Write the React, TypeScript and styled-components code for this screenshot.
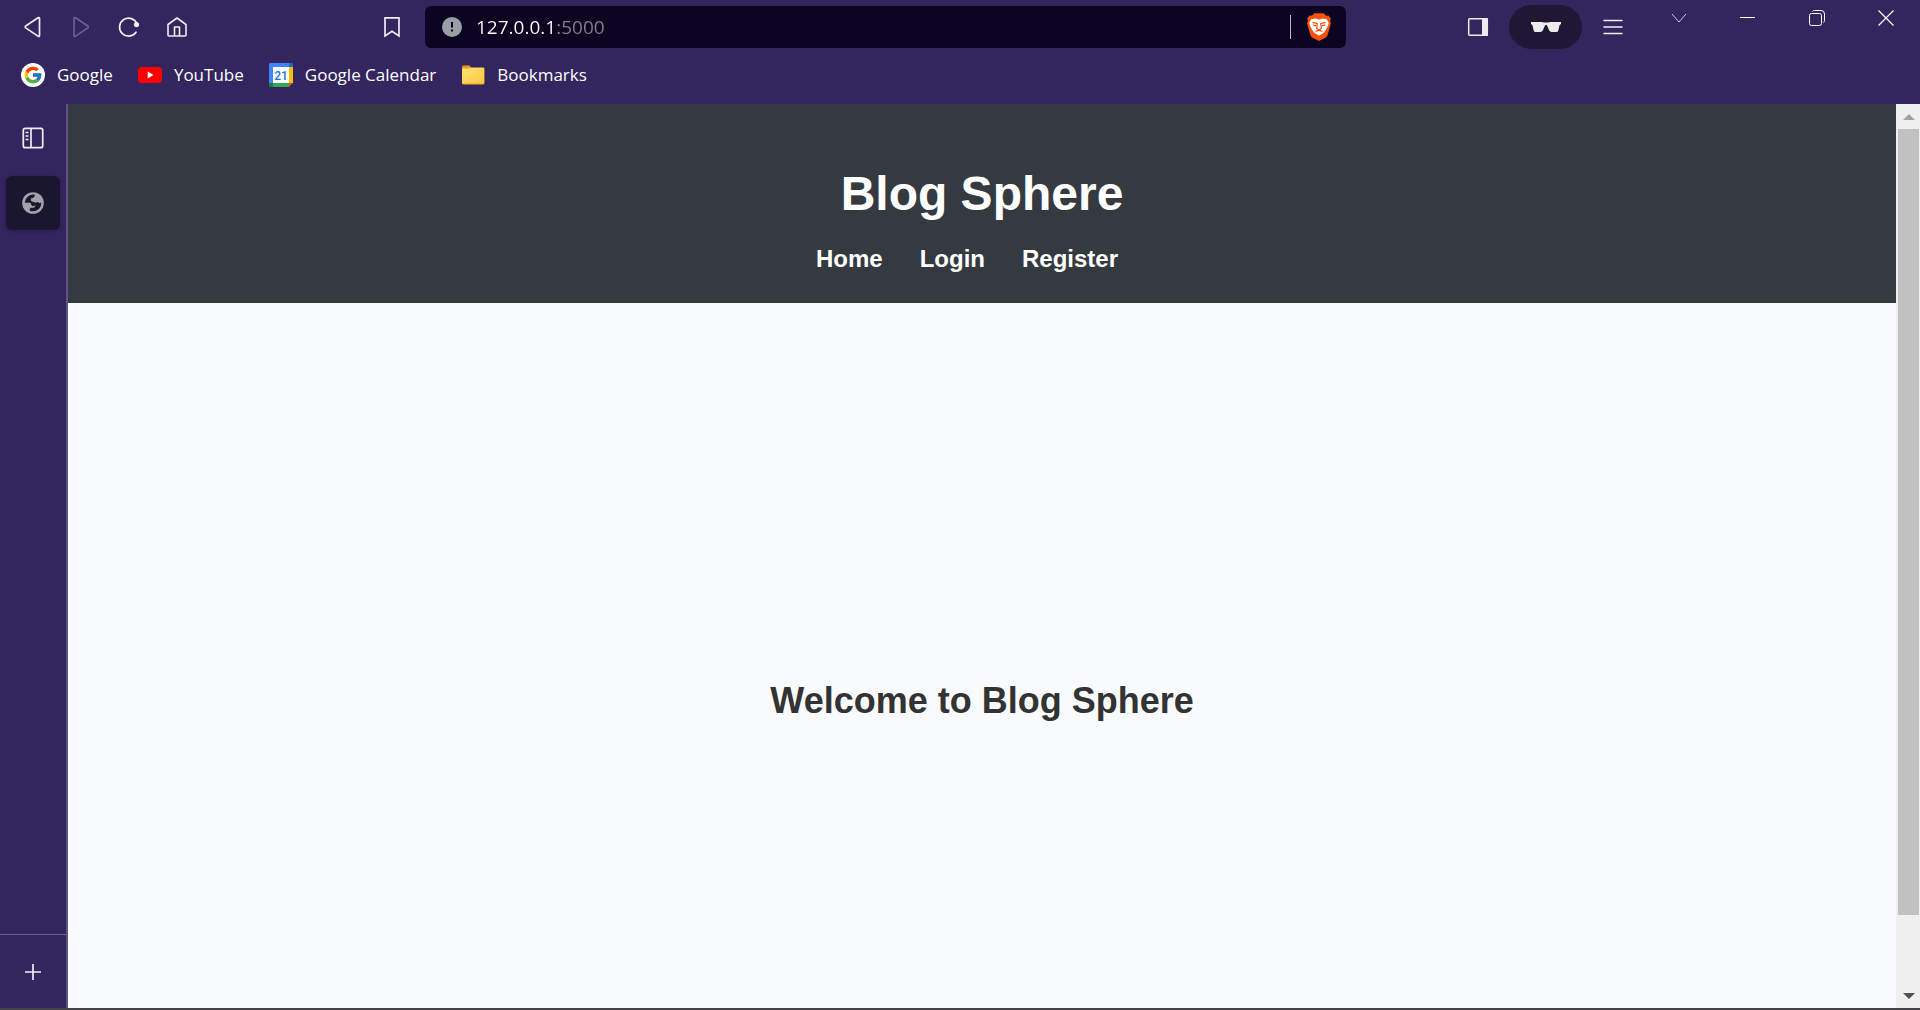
import React from "react";
import styled, { createGlobalStyle } from "styled-components";
import { FcGoogle } from "react-icons/fc";

const uiFont = `"Segoe UI", "Open Sans", "Noto Sans", sans-serif`;

const GlobalStyle = createGlobalStyle`
  *, *::before, *::after { box-sizing: border-box; }
  body { margin: 0; background: #33255e; }
  button, input { font: inherit; color: inherit; }
  h1, h2, ul { margin: 0; padding: 0; }
  svg { display: block; }
`;

const Browser = styled.div`
  display: flex;
  flex-direction: column;
  height: 100vh;
  overflow: hidden;
  background: #33255e;
  color: #f1eff7;
  font-family: ${uiFont};
  border-bottom: 2px solid #444446;
`;

const Toolbar = styled.header`
  display: flex;
  align-items: center;
  height: 54px;
`;

const NavControls = styled.div`
  display: flex;
  flex: 0 0 425px;
  padding: 0 9px;
`;

const IconButton = styled.button<{ $dim?: boolean; $push?: boolean }>`
  display: grid;
  place-items: center;
  width: 48px;
  height: 44px;
  padding: 0;
  border: 0;
  background: none;
  color: ${(p) => (p.$dim ? "#6b5f8f" : "#efedf5")};
  margin-left: ${(p) => (p.$push ? "auto" : "0")};
`;

const AddressBar = styled.form`
  display: flex;
  align-items: center;
  flex: 1;
  height: 42px;
  padding: 0 14px 0 17px;
  border-radius: 6px;
  background: #0c0522;
`;

const AddressInput = styled.input`
  flex: 1;
  min-width: 0;
  margin-left: 14px;
  padding: 0;
  border: 0;
  outline: 0;
  font-size: 19px;
  line-height: 28px;
  color: #ffffff;
  background: linear-gradient(to right, #ffffff 81px, #837f90 81px);
  background-clip: text;
  -webkit-background-clip: text;
  -webkit-text-fill-color: transparent;
`;

const ShieldButton = styled.button`
  display: flex;
  padding: 0 0 0 15px;
  border: 0;
  border-left: 1px solid #bdbac6;
  height: 24px;
  align-items: center;
  background: none;
`;

const WindowTools = styled.div`
  display: flex;
  align-items: center;
  align-self: stretch;
  gap: 7px;
  padding-left: 108px;
`;

const PrivatePill = styled.button`
  display: grid;
  place-items: center;
  width: 73px;
  height: 44px;
  padding: 0;
  border: 0;
  border-radius: 22px;
  background: #1e1835;
  color: #ececec;
`;

const WindowButtons = styled.div`
  display: flex;
  align-self: flex-start;
`;

const WindowButton = styled.button`
  display: grid;
  place-items: center;
  width: 69px;
  height: 35px;
  padding: 0;
  border: 0;
  background: none;
  color: #ffffff;
`;

const BookmarksBar = styled.nav`
  display: flex;
  align-items: center;
  gap: 25px;
  height: 50px;
  padding: 0 21px 8px;
`;

const BookmarkLink = styled.a`
  display: flex;
  align-items: center;
  gap: 12px;
  color: #ffffff;
  font-size: 17px;
  line-height: 24px;
  text-decoration: none;
  white-space: nowrap;
`;

const GoogleBadge = styled.span`
  display: grid;
  place-items: center;
  width: 24px;
  height: 24px;
  border-radius: 50%;
  background: #ffffff;
`;

const Workspace = styled.div`
  display: flex;
  flex: 1;
  min-height: 0;
`;

const Sidebar = styled.aside`
  display: flex;
  flex-direction: column;
  align-items: center;
  width: 68px;
  padding-top: 12px;
  border-right: 2px solid #5f5285;
`;

const TabButton = styled.button`
  display: grid;
  place-items: center;
  width: 54px;
  height: 54px;
  margin-top: 16px;
  padding: 0;
  border: 0;
  border-radius: 6px;
  background: #1b162f;
  color: #a0a4aa;
  box-shadow: 0 1px 4px rgba(20, 12, 50, 0.35);
`;

const NewTab = styled.div`
  display: grid;
  place-items: center;
  align-self: stretch;
  height: 74px;
  margin-top: auto;
  border-top: 1px solid #6b5f8f;
`;

const Page = styled.div`
  display: flex;
  flex: 1;
  flex-direction: column;
  min-width: 0;
  background: #f8fafc;
  font-family: Arial, "Liberation Sans", sans-serif;
`;

const SiteHeader = styled.header`
  display: flex;
  flex-direction: column;
  align-items: center;
  gap: 24px;
  padding: 62px 0 30px;
  background: #353a41;
  color: #ffffff;
`;

const SiteTitle = styled.h1`
  font-size: 48px;
  line-height: 55px;
`;

const SiteNav = styled.ul`
  display: flex;
  gap: 37px;
  padding-right: 30px;
  list-style: none;
`;

const SiteLink = styled.a`
  display: block;
  color: inherit;
  font-size: 24px;
  font-weight: bold;
  line-height: 28px;
  text-decoration: none;
`;

const Welcome = styled.main`
  display: grid;
  flex: 1;
  place-items: center;
  padding-top: 90px;
`;

const WelcomeTitle = styled.h2`
  color: #333333;
  font-size: 36px;
  line-height: 42px;
`;

const Scrollbar = styled.div`
  display: flex;
  flex-direction: column;
  width: 24px;
  padding: 0 1px 0 2px;
  background: #f0f0f0;
`;

const ScrollArrow = styled.button`
  display: grid;
  place-items: center;
  height: 25px;
  padding: 0;
  border: 0;
  background: none;
`;

const ScrollTrack = styled.div`
  flex: 1;
`;

const ScrollThumb = styled.div`
  height: 92%;
  background: #c1c1c1;
`;

const YouTubeIcon = () => (
  <svg width="24" height="24" viewBox="0 0 24 24" aria-hidden="true">
    <rect y="4" width="24" height="16" rx="4" fill="#ff0000" />
    <path d="M9.7 8.600v6.800l5.800-3.400z" fill="#fff" />
  </svg>
);

const CalendarIcon = () => (
  <svg width="24" height="24" viewBox="0 0 24 24" aria-hidden="true">
    <path d="M0 1a1 1 0 0 1 1-1h19v4H4v16H0z" fill="#4285f4" />
    <path d="M20 0h3a1 1 0 0 1 1 1v3h-4z" fill="#1967d2" />
    <path d="M20 4h4v16h-4z" fill="#fbbc04" />
    <path d="M4 20h16v4H4z" fill="#34a853" />
    <path d="M0 20h4v4H1a1 1 0 0 1-1-1z" fill="#188038" />
    <path d="M20 20h4l-4 4z" fill="#ea4335" />
    <path d="M4 4h16v16H4z" fill="#fff" />
    <text x="12" y="16.500" textAnchor="middle" fontFamily="Roboto, sans-serif" fontSize="12" fontWeight="500" fill="#1a73e8">21</text>
  </svg>
);

const FolderIcon = () => (
  <svg width="24" height="24" viewBox="0 0 24 24" aria-hidden="true">
    <defs>
      <linearGradient id="folder" x1="0" y1="0" x2="1" y2="1">
        <stop offset="0" stopColor="#ffe17a" />
        <stop offset="1" stopColor="#fcc736" />
      </linearGradient>
    </defs>
    <path d="M1 4a1.500 1.500 0 0 1 1.500-1.500h6L10 4.500v4H1z" fill="#e8a010" />
    <path d="M1 5.500h7.500l1.500-1h12a1.400 1.400 0 0 1 1.400 1.400v14a1.400 1.400 0 0 1-1.400 1.400H2.400A1.400 1.400 0 0 1 1 19.900z" fill="url(#folder)" />
    <path d="M2 21h20.500" stroke="#d79b1c" strokeWidth="0.800" />
  </svg>
);

const BraveIcon = () => (
  <svg width="26" height="28" viewBox="0 0 26 28" aria-hidden="true">
    <path d="M8.500.3h9l2.700 2.500 2.300-.3 2.300 3-.7 2.300.8 2.500-3.100 11.300c-.4 1.500-1.200 2.300-2.300 3.100L13 28l-6.500-3.300c-1.100-.8-1.900-1.600-2.300-3.100L1.100 10.300l.8-2.500-.7-2.300 2.300-3 2.300.3z" fill="#fb4f0b" />
    <path d="M5.200 6.300L9 5.400l4 1 4-1 3.800.9 2 3.600-1.200 3.800-2.600 4.600-1.500 1.700-4.500 2.800-4.500-2.800L7 18.300l-2.600-4.600-1.200-3.800z" fill="#fff" />
    <path d="M6.500 9.300l4.800 1.300-.7 5 2.400 1.500 2.400-1.500-.7-5 4.800-1.300M7 12l3 .8M19 12l-3 .8M9.500 18.500l3.500-1.400 3.500 1.400" fill="none" stroke="#fb4f0b" strokeWidth="1.200" strokeLinejoin="round" />
  </svg>
);

const GlobeIcon = () => (
  <svg width="22" height="22" viewBox="0 0 22 22" aria-hidden="true">
    <circle cx="11" cy="11" r="10.800" fill="currentColor" />
    <path
      d="M2.700 10.700A8.400 8.400 0 0 1 12.800 2.800V4.300L10.600 6.200H8.900V8.400L10.300 9.700H12L13.600 11.500V13.500L12 14H10.500L8.700 12.200V10.700z"
      fill="#1b162f"
    />
    <path d="M19.300 10.600A8.400 8.400 0 0 1 7.800 18.700V16.600L9.300 15.800H12L13.700 13.500L12.200 11.500L14.200 10.200H16.500L17.500 11.200z" fill="#1b162f" />
  </svg>
);

const siteLinks = ["Home", "Login", "Register"];

export default function App() {
  return (
    <Browser>
      <GlobalStyle />
      <Toolbar>
        <NavControls>
          <IconButton aria-label="Back">
            <svg width="24" height="24" viewBox="0 0 24 24" fill="none" stroke="currentColor" strokeWidth="1.700" strokeLinejoin="round">
              <path d="M18.500 3.300v17.400a.8.8 0 0 1-1.200.7L4.700 12.900a1.200 1.200 0 0 1 0-1.900L17 2.700A1 1 0 0 1 18.500 3.300z" />
            </svg>
          </IconButton>
          <IconButton aria-label="Forward" $dim>
            <svg width="24" height="24" viewBox="0 0 24 24" fill="none" stroke="currentColor" strokeWidth="1.700" strokeLinejoin="round">
              <path d="M5 3.300v17.400a.8.8 0 0 0 1.200.7l12.600-8.500a1.200 1.200 0 0 0 0-1.900L6.500 2.700A1 1 0 0 0 5 3.300z" />
            </svg>
          </IconButton>
          <IconButton aria-label="Reload">
            <svg width="24" height="24" viewBox="0 0 24 24" fill="none" stroke="currentColor" strokeWidth="1.700">
              <path d="M19 17.200A9 9 0 1 1 20 9" strokeLinecap="round" />
              <circle cx="19.500" cy="9.600" r="2.600" fill="currentColor" stroke="none" />
            </svg>
          </IconButton>
          <IconButton aria-label="Home">
            <svg width="24" height="24" viewBox="0 0 24 24" fill="none" stroke="currentColor" strokeWidth="1.600" strokeLinejoin="round">
              <path d="M3 9.500L12 3l9 6.500V20a1 1 0 0 1-1 1H4a1 1 0 0 1-1-1z" />
              <path d="M9.500 21v-9h5v9" />
            </svg>
          </IconButton>
          <IconButton aria-label="Bookmark this page" $push>
            <svg width="24" height="24" viewBox="0 0 24 24" fill="none" stroke="currentColor" strokeWidth="1.700">
              <path d="M5 2.800h14v18.200l-7-4.800-7 4.800z" />
            </svg>
          </IconButton>
        </NavControls>

        <AddressBar>
          <svg width="20" height="20" viewBox="0 0 20 20" aria-hidden="true">
            <circle cx="10" cy="10" r="10" fill="#9a9ea5" />
            <path d="M10 5v5.500M10 12.500v2" stroke="#0c0522" strokeWidth="2" />
          </svg>
          <AddressInput aria-label="Address" defaultValue="127.0.0.1:5000" />
          <ShieldButton type="button" aria-label="Brave Shields">
            <BraveIcon />
          </ShieldButton>
        </AddressBar>

        <WindowTools>
          <IconButton aria-label="Side panel">
            <svg width="22" height="20" viewBox="0 0 22 20" aria-hidden="true">
              <rect x="1.700" y="1.700" width="18.600" height="16.600" rx="1" fill="none" stroke="#ececec" strokeWidth="1.500" />
              <path d="M15 1h5a1 1 0 0 1 1 1v16a1 1 0 0 1-1 1h-5z" fill="#ececec" />
            </svg>
          </IconButton>
          <PrivatePill aria-label="Private window">
            <svg width="32" height="12" viewBox="0 0 32 12" aria-hidden="true">
              <path d="M1 1h11q4 1 8 0h11v2l-1.400 1-1.300 5.500Q28 11 26.500 11h-5Q20 11 19.200 9.600L17.500 5.400Q17 4 16 4t-1.500 1.400l-1.700 4.200Q12 11 10.500 11h-5Q4 11 3.700 9.500L2.400 4 1 3z" fill="currentColor" />
            </svg>
          </PrivatePill>
          <IconButton aria-label="Menu">
            <svg width="22" height="18" viewBox="0 0 22 18" stroke="currentColor" strokeWidth="1.600" strokeLinecap="round">
              <path d="M2 2.500h18M2 9h18M2 15.500h18" />
            </svg>
          </IconButton>
          <WindowButtons>
            <WindowButton aria-label="Search tabs">
              <svg width="16" height="16" viewBox="0 0 16 16" fill="none" stroke="#cfcad9">
                <path d="M1 4l7 8 7-8" />
              </svg>
            </WindowButton>
            <WindowButton aria-label="Minimize">
              <svg width="15" height="15" viewBox="0 0 15 15" stroke="currentColor">
                <path d="M0 7.500h15" />
              </svg>
            </WindowButton>
            <WindowButton aria-label="Restore">
              <svg width="16" height="16" viewBox="0 0 16 16" fill="none" stroke="currentColor">
                <rect x="0.500" y="3.500" width="12" height="12" rx="2" />
                <path d="M3.500 1.500Q4 .5 5.500.5H12a3.500 3.500 0 0 1 3.500 3.500v6.500q0 1.500-1 2" />
              </svg>
            </WindowButton>
            <WindowButton aria-label="Close">
              <svg width="16" height="16" viewBox="0 0 16 16" stroke="currentColor" strokeWidth="1.200">
                <path d="M.5.5l15 15M15.500.5l-15 15" />
              </svg>
            </WindowButton>
          </WindowButtons>
        </WindowTools>
      </Toolbar>

      <BookmarksBar aria-label="Bookmarks">
        <BookmarkLink href="#google"><GoogleBadge><FcGoogle size={20} /></GoogleBadge>Google</BookmarkLink>
        <BookmarkLink href="#youtube"><YouTubeIcon />YouTube</BookmarkLink>
        <BookmarkLink href="#calendar"><CalendarIcon />Google Calendar</BookmarkLink>
        <BookmarkLink href="#bookmarks"><FolderIcon />Bookmarks</BookmarkLink>
      </BookmarksBar>

      <Workspace>
        <Sidebar>
          <IconButton aria-label="Toggle vertical tabs">
            <svg width="22" height="22" viewBox="0 0 22 22" fill="none" stroke="currentColor" strokeWidth="1.700">
              <rect x="1.300" y="1.300" width="19.400" height="19.400" rx="2" />
              <path d="M9 1.500v19M3.500 5.500h3M3.500 9h3M3.500 12.500h3" />
            </svg>
          </IconButton>
          <TabButton aria-label="Blog Sphere tab">
            <GlobeIcon />
          </TabButton>
          <NewTab>
            <IconButton aria-label="New tab">
              <svg width="18" height="18" viewBox="0 0 18 18" stroke="currentColor" strokeWidth="1.700">
                <path d="M9 1v16M1 9h16" />
              </svg>
            </IconButton>
          </NewTab>
        </Sidebar>

        <Page>
          <SiteHeader>
            <SiteTitle>Blog Sphere</SiteTitle>
            <nav aria-label="Site">
              <SiteNav>
                {siteLinks.map((name) => (
                  <li key={name}>
                    <SiteLink href={`#${name.toLowerCase()}`}>{name}</SiteLink>
                  </li>
                ))}
              </SiteNav>
            </nav>
          </SiteHeader>
          <Welcome>
            <WelcomeTitle>Welcome to Blog Sphere</WelcomeTitle>
          </Welcome>
        </Page>

        <Scrollbar>
          <ScrollArrow aria-label="Scroll up">
            <svg width="12" height="6" viewBox="0 0 12 6"><path d="M0 6l6-6 6 6z" fill="#a3a3a3" /></svg>
          </ScrollArrow>
          <ScrollTrack>
            <ScrollThumb />
          </ScrollTrack>
          <ScrollArrow aria-label="Scroll down">
            <svg width="12" height="6" viewBox="0 0 12 6"><path d="M0 0l6 6 6-6z" fill="#505050" /></svg>
          </ScrollArrow>
        </Scrollbar>
      </Workspace>
    </Browser>
  );
}
